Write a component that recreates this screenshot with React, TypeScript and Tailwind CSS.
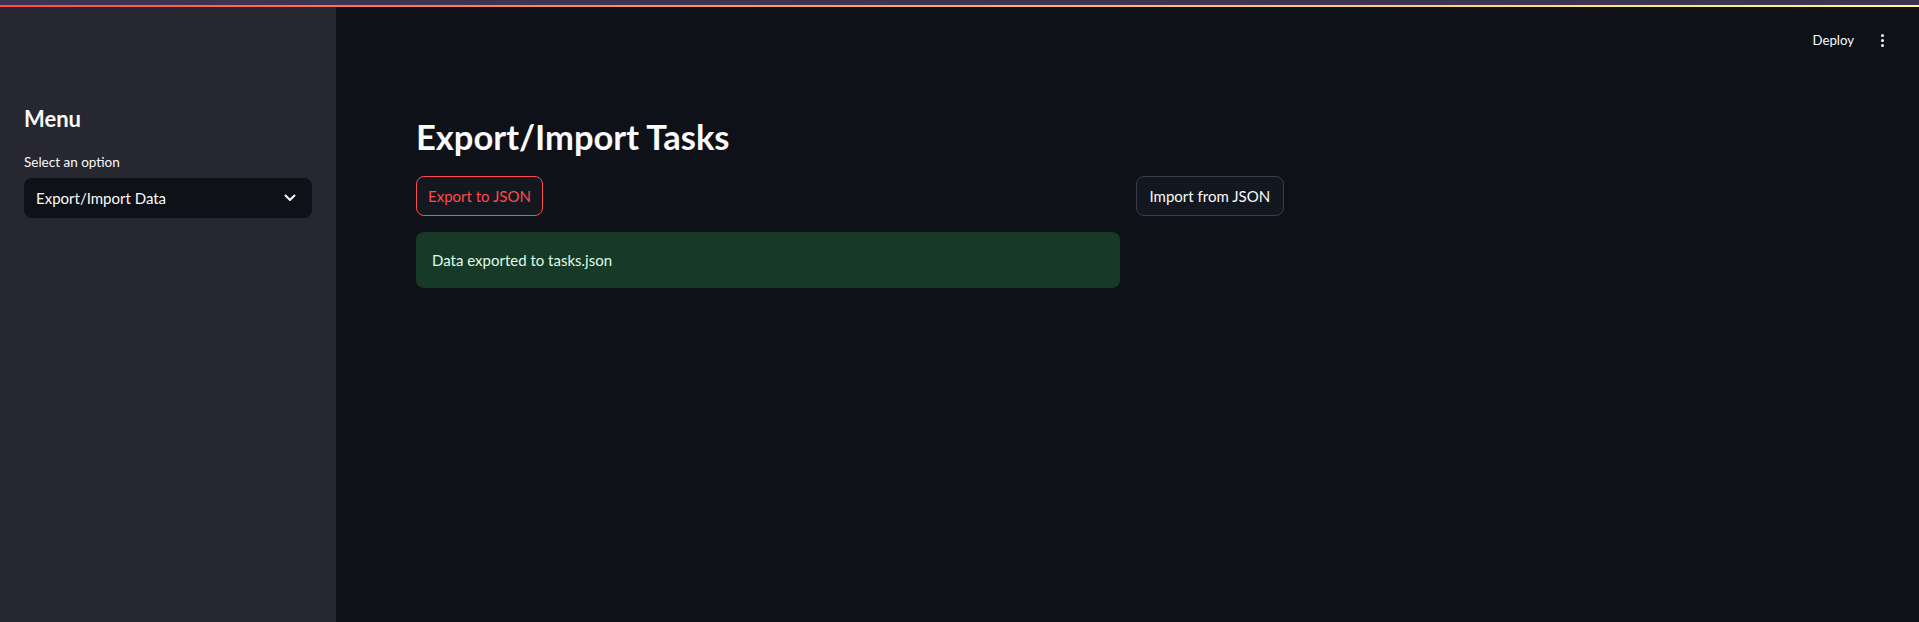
import { useState } from "react";

// sidebar select with its label
function SelectBox({ label, value }: { label: string; value: string }) {
  return (
    <div className="flex flex-col">
      <label className="text-[13.5px] leading-[20px] text-[#fafafa]">{label}</label>
      <div className="mt-[6px] flex h-[40px] items-center justify-between rounded-lg bg-[#0e1117] pl-3 pr-4">
        <span className="text-[15px] text-[#fafafa]">{value}</span>
        <svg width="12" height="8" viewBox="0 0 12 8" fill="none">
          <path d="M1.5 1.5 L6 6 L10.5 1.5" stroke="#fafafa" strokeWidth="2" strokeLinecap="round" strokeLinejoin="round" />
        </svg>
      </div>
    </div>
  );
}

export default function App() {
  const [exported] = useState(true);

  return (
    <div className="flex h-[622px] w-full flex-col overflow-hidden bg-[#0e1117] font-['Lato',sans-serif] text-[#fafafa]">
      {/* top decoration */}
      <div className="h-[5px] bg-[#3c344e]" />
      <div className="h-[2px] bg-gradient-to-r from-[#ff4b4b] to-[#fffd80]" />

      <div className="flex flex-1">
        {/* sidebar */}
        <aside className="w-[336px] shrink-0 bg-[#262730] px-6 pt-[98px]">
          <h2 className="text-[22px] font-bold leading-[28px]">Menu</h2>
          <div className="mt-[19px]">
            <SelectBox label="Select an option" value="Export/Import Data" />
          </div>
        </aside>

        {/* main */}
        <main className="flex flex-1 flex-col">
          {/* header */}
          <div className="flex h-[67px] items-center justify-end gap-[27px] pr-[35px]">
            <span className="text-[13.2px]">Deploy</span>
            <div className="flex flex-col gap-[2px]">
              <span className="h-[3px] w-[3px] rounded-full bg-[#fafafa]" />
              <span className="h-[3px] w-[3px] rounded-full bg-[#fafafa]" />
              <span className="h-[3px] w-[3px] rounded-full bg-[#fafafa]" />
            </div>
          </div>

          <div className="px-20 pt-[41px]">
            <h1 className="text-[34.5px] font-bold leading-[44px]">Export/Import Tasks</h1>

            <div className="mt-[17px] grid grid-cols-2 gap-4">
              <div className="flex flex-col items-start gap-4">
                <button className="h-[40px] rounded-lg border border-[#ff4b4b] bg-[#13171f] px-[11px] text-[15px] text-[#ff4b4b]">
                  Export to JSON
                </button>
                {exported && (
                  <div className="flex h-[56px] w-full items-center rounded-lg bg-[#173928] px-4 text-[15px] text-[#dffde9]">
                    Data exported to tasks.json
                  </div>
                )}
              </div>
              <div className="flex items-start">
                <button className="h-[40px] rounded-lg border border-[#3b3d44] bg-[#13171f] px-[13px] text-[15px] text-[#fafafa]">
                  Import from JSON
                </button>
              </div>
            </div>
          </div>
        </main>
      </div>
    </div>
  );
}
